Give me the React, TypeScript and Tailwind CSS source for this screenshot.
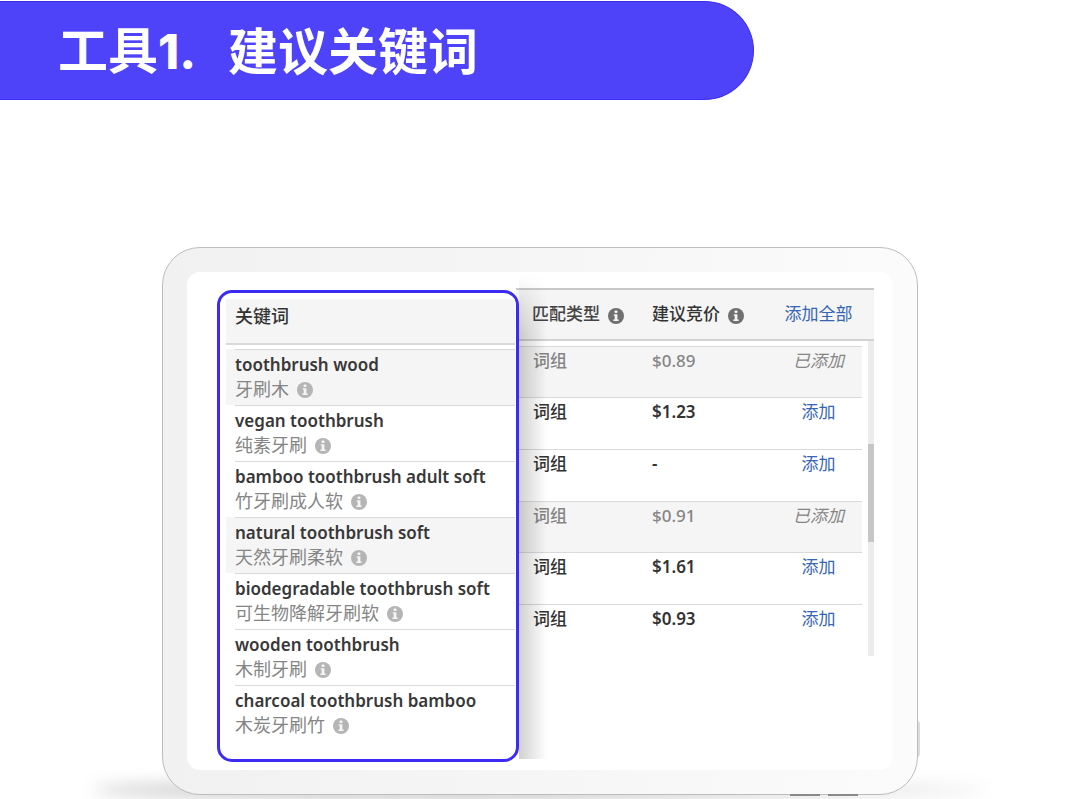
import React from "react";

type Keyword = { en: string; zh: string; added?: boolean };
type Bid = { price: string; added?: boolean };

const keywords: Keyword[] = [
  { en: "toothbrush wood", zh: "牙刷木", added: true },
  { en: "vegan toothbrush", zh: "纯素牙刷" },
  { en: "bamboo toothbrush adult soft", zh: "竹牙刷成人软" },
  { en: "natural toothbrush soft", zh: "天然牙刷柔软", added: true },
  { en: "biodegradable toothbrush soft", zh: "可生物降解牙刷软" },
  { en: "wooden toothbrush", zh: "木制牙刷" },
  { en: "charcoal toothbrush bamboo", zh: "木炭牙刷竹" },
];

const bids: Bid[] = [
  { price: "$0.89", added: true },
  { price: "$1.23" },
  { price: "-" },
  { price: "$0.91", added: true },
  { price: "$1.61" },
  { price: "$0.93" },
];

function InfoIcon({ className }: { className: string }) {
  return (
    <svg viewBox="0 0 16 16" className={`size-4 shrink-0 ${className}`} aria-hidden="true">
      <circle cx="8" cy="8" r="8" fill="currentColor" />
      <rect x="6.6" y="2.4" width="2.8" height="2.6" rx="0.8" fill="#f5f5f5" />
      <path d="M5.8 6.2h3.6v5.2h1.2v1.6H5.4v-1.6h1.3V7.7h-.9z" fill="#f5f5f5" />
    </svg>
  );
}

function KeywordCard() {
  return (
    <section className="relative z-10 w-[302px] shrink-0 self-start rounded-[15px] border-3 border-[#3b2bf5] bg-white pt-[6px] pr-px pb-[18px] pl-[6px]">
      <div className="pointer-events-none absolute -top-[18px] -right-[31px] bottom-0 w-[28px] bg-linear-to-r from-black/18 via-black/9 to-transparent [mask-image:linear-gradient(to_bottom,transparent,black_60px)]" />
      <table className="w-full table-fixed border-collapse text-left">
        <thead>
          <tr>
            <th className="p-0 font-medium">
              <div className="mb-[4px] h-[46px] border-b-2 border-[#d9d9d9] bg-[#f5f5f5] pl-[9px] text-[18px] leading-[34px] text-[#333]">
                关键词
              </div>
            </th>
          </tr>
        </thead>
        <tbody>
          {keywords.map((k) => (
            <tr key={k.en} className={k.added ? "bg-[#f5f5f5]" : "bg-white"}>
              <td className="p-0 pl-[9px]">
                <div className="h-[56px] border-t border-[#d9d9d9] pt-[2px] whitespace-nowrap">
                  <div className="text-[17px] leading-[25px] font-semibold text-[#383838]">{k.en}</div>
                  <div className="flex items-center gap-2 text-[18px] leading-[25px] text-[#858585]">
                    {k.zh}
                    <InfoIcon className="text-[#b5b5b5]" />
                  </div>
                </div>
              </td>
            </tr>
          ))}
        </tbody>
      </table>
    </section>
  );
}

function BidTable() {
  const head =
    "mb-[5px] flex h-[53px] items-start gap-2 border-t-2 border-b-2 border-t-[#c9c9c9] border-b-[#d2d2d2] bg-[#f5f5f5] leading-[48px] whitespace-nowrap";
  return (
    <section className="relative -ml-[3px] -mt-[2px] min-w-0 flex-1 self-start text-[17px]">
      <table className="w-full table-fixed border-collapse text-left">
        <colgroup>
          <col className="w-[136px]" />
          <col className="w-[123px]" />
          <col />
        </colgroup>
        <thead>
          <tr>
            <th className="p-0 font-medium text-[#444]">
              <div className={`${head} pl-[16px]`}>
                匹配类型
                <InfoIcon className="mt-[18px] text-[#707070]" />
              </div>
            </th>
            <th className="p-0 font-medium text-[#333]">
              <div className={head}>
                建议竞价
                <InfoIcon className="mt-[18px] text-[#707070]" />
              </div>
            </th>
            <th className="p-0 font-normal">
              <div className={`${head} justify-center pr-[12px]`}>
                <button type="button" className="text-[#3565b5]">
                  添加全部
                </button>
              </div>
            </th>
          </tr>
        </thead>
        <tbody>
          {bids.map((b) => {
            const cell = b.added
              ? "h-[51px] border-t border-[#d9d9d9] bg-[#f5f5f5] leading-[28px] text-[#858585]"
              : "h-[52px] border-t border-[#d9d9d9] bg-white leading-[28px] text-[#333]";
            return (
              <tr key={b.price} className={b.added ? "font-medium" : "font-semibold"}>
                <td className="p-0 font-medium">
                  <div className={`${cell} pl-[17px]`}>词组</div>
                </td>
                <td className="p-0">
                  <div className={cell}>{b.price}</div>
                </td>
                <td className="p-0 pr-[12px] text-center font-normal">
                  <div className={cell}>
                    {b.added ? (
                      <em>已添加</em>
                    ) : (
                      <button type="button" className="text-[#3565b5]">
                        添加
                      </button>
                    )}
                  </div>
                </td>
              </tr>
            );
          })}
        </tbody>
      </table>
      <div className="absolute top-[53px] right-0 bottom-0 w-[6px] bg-[#ececec]">
        <div className="mt-[103px] h-[98px] bg-[#c6c6c6]" />
      </div>
    </section>
  );
}

export default function App() {
  return (
    <main className="overflow-hidden bg-white pt-px font-['Noto_Sans','Noto_Sans_CJK_SC',sans-serif]">
      <h1 className="flex h-[99px] w-[754px] max-w-full items-center gap-8 rounded-r-full border border-l-0 border-[#3a2df0] bg-[#4f43fa] pl-[58px] text-[50px] leading-none font-bold whitespace-nowrap text-white">
        <span>
          工具<span className="font-['Inter',sans-serif] text-[48px] font-extrabold">1.</span>
        </span>
        <span>建议关键词</span>
      </h1>

      <div className="relative mx-auto mt-[147px] mb-[4px] w-full max-w-[756px]">
        <div className="absolute -right-[70px] -bottom-[6px] -left-[70px] h-[22px] rounded-[50%] bg-linear-to-r from-black/20 via-black/18 to-black/6 blur-[8px]" />
        <div className="absolute right-[-2px] bottom-[38px] h-[36px] w-[3px] rounded-r bg-[#dcdcdc]" />
        <div className="relative rounded-[38px] border border-[#bdbdbd] bg-linear-to-r from-[#f1f1f1] to-[#fbfbfb] p-[24px]">
          <div className="flex min-h-[498px] rounded-[13px] bg-white pt-[18px] pr-[19px] pb-[8px] pl-[30px]">
            <KeywordCard />
            <BidTable />
          </div>
        </div>
        <div className="absolute right-[60px] -bottom-px flex gap-2">
          <span className="h-[2px] w-[30px] bg-[#8a8a8a]" />
          <span className="h-[2px] w-[30px] bg-[#8a8a8a]" />
        </div>
      </div>
    </main>
  );
}
